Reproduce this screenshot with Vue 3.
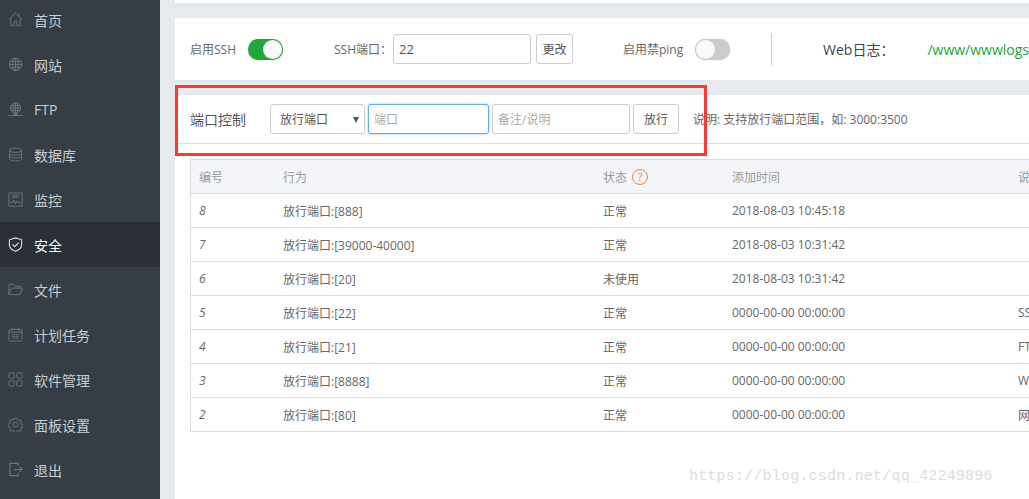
<script setup>
const menu = [
  { label: '首页', icon: 'home' },
  { label: '网站', icon: 'globe' },
  { label: 'FTP', icon: 'ftp' },
  { label: '数据库', icon: 'db' },
  { label: '监控', icon: 'monitor' },
  { label: '安全', icon: 'shield', active: true },
  { label: '文件', icon: 'folder' },
  { label: '计划任务', icon: 'calendar' },
  { label: '软件管理', icon: 'apps' },
  { label: '面板设置', icon: 'gear' },
  { label: '退出', icon: 'exit' },
]
const rows = [
  ['8', '放行端口:[888]', '正常', '2018-08-03 10:45:18', ''],
  ['7', '放行端口:[39000-40000]', '正常', '2018-08-03 10:31:42', ''],
  ['6', '放行端口:[20]', '未使用', '2018-08-03 10:31:42', ''],
  ['5', '放行端口:[22]', '正常', '0000-00-00 00:00:00', 'SSH'],
  ['4', '放行端口:[21]', '正常', '0000-00-00 00:00:00', 'FTP'],
  ['3', '放行端口:[8888]', '正常', '0000-00-00 00:00:00', 'WWW'],
  ['2', '放行端口:[80]', '正常', '0000-00-00 00:00:00', '网站'],
]
</script>

<template>
  <div class="page">
    <aside class="side">
      <div v-for="m in menu" :key="m.label" class="item" :class="{ active: m.active }">
        <svg class="ico" viewBox="0 0 16 16" fill="none" stroke="currentColor" stroke-width="1">
          <template v-if="m.icon === 'home'">
            <path d="M.8 8 8 1.2 15.2 8M3 7v7.5h3.5V10h3v4.5H13V7M11.5 2v2.5" />
          </template>
          <template v-else-if="m.icon === 'globe'">
            <circle cx="8" cy="8" r="6.6" />
            <ellipse cx="8" cy="8" rx="3" ry="6.6" />
            <path d="M1.4 8h13.2M2.2 5h11.6M2.2 11h11.6M8 1.4v13.2" />
          </template>
          <template v-else-if="m.icon === 'ftp'">
            <circle cx="8" cy="6.5" r="5.5" />
            <ellipse cx="8" cy="6.5" rx="2.5" ry="5.5" />
            <path d="M2.5 6.5h11M3 4h10M3 9h10M8 1v11M.3 14.5h15.4" />
            <rect x="6" y="12.5" width="4" height="2.5" fill="currentColor" stroke="none" />
          </template>
          <template v-else-if="m.icon === 'db'">
            <ellipse cx="8" cy="3.5" rx="6.5" ry="2.3" />
            <path d="M1.5 3.5v9c0 1.3 3 2.3 6.5 2.3s6.5-1 6.5-2.3v-9M1.5 6.5c0 1.3 3 2.3 6.5 2.3s6.5-1 6.5-2.3M1.5 9.5c0 1.3 3 2.3 6.5 2.3s6.5-1 6.5-2.3" />
          </template>
          <template v-else-if="m.icon === 'monitor'">
            <rect x="1" y="1" width="14" height="14" />
            <rect x="4" y="2.5" width="8" height="4" fill="currentColor" stroke="none" opacity=".55" />
            <path d="M2 11h3l1.2-2.5 1.6 4 1.4-3 .8 1.5H14" />
          </template>
          <template v-else-if="m.icon === 'shield'">
            <path d="M8 .9 14.5 3v5.5c0 3.2-3 5.4-6.5 6.7-3.500-1.300-6.500-3.500-6.500-6.700V3Z" stroke-width="1.200" />
            <path d="m4.800 7.800 2.400 2.400 4.200-4.200" stroke-width="1.300" />
          </template>
          <template v-else-if="m.icon === 'folder'">
            <path d="M1 13.500V2.500h5l1.500 2H13v2M1 13.500h11.500L15.500 6.500H3.800Z" />
          </template>
          <template v-else-if="m.icon === 'calendar'">
            <rect x="1" y="2.500" width="14" height="12.500" rx="1.500" />
            <path d="M4.500 1v3M11.500 1v3M1 5.500h14" />
            <path d="M4 8h8M4 10h8M4 12h8M6.500 7.500v5M9.500 7.500v5" stroke-dasharray="1.500 .8" />
          </template>
          <template v-else-if="m.icon === 'apps'">
            <rect x="1" y="1" width="5.700" height="5.700" rx="1.200" />
            <rect x="9.300" y="1" width="5.700" height="5.700" rx="1.200" />
            <rect x="1" y="9.300" width="5.700" height="5.700" rx="1.200" />
            <rect x="9.300" y="9.300" width="5.700" height="5.700" rx="1.200" />
          </template>
          <template v-else-if="m.icon === 'gear'">
            <circle cx="8" cy="8" r="2.600" />
            <path d="M6.800 1.200h2.400l.4 1.900 1.500.7 1.700-1 1.600 1.700-1 1.600.7 1.600 1.900.4v2.400l-1.900.4-.7 1.500 1 1.700-1.700 1.300-1.600-1-1.500.6-.4 1.900H6.800l-.4-1.900-1.500-.6-1.700 1-1.500-1.500 1-1.600-.7-1.500-1.900-.4V7.400l1.900-.4.700-1.500-1-1.700 1.500-1.500 1.700 1 1.500-.7Z" />
          </template>
          <template v-else>
            <path d="M11 4V1.500H2v13h9V12M6.500 8H15M12.500 5.500 15 8l-2.500 2.500" stroke-width="1.200" />
          </template>
        </svg>
        <span>{{ m.label }}</span>
      </div>
    </aside>

    <main class="main">
      <div class="strip"></div>

      <section class="top">
        <span class="lbl">启用SSH</span>
        <span class="switch on"><i></i></span>
        <span class="lbl ssh">SSH端口：</span>
        <input class="field portval" value="22" />
        <button class="btn change">更改</button>
        <span class="lbl ping">启用禁ping</span>
        <span class="switch"><i></i></span>
        <span class="divider"></span>
        <span class="weblabel">Web日志：</span>
        <span class="path">/www/wwwlogs</span>
      </section>

      <section class="panel">
        <div class="ctrl">
          <span class="title">端口控制</span>
          <div class="select">放行端口<b></b></div>
          <input class="field port" placeholder="端口" />
          <input class="field note" placeholder="备注/说明" />
          <button class="btn allow">放行</button>
          <span class="hint">说明: 支持放行端口范围，如: 3000:3500</span>
        </div>

        <div class="table">
          <div class="tr head">
            <div class="c1">编号</div>
            <div class="c2">行为</div>
            <div class="c3">状态<em class="help">?</em></div>
            <div class="c4">添加时间</div>
            <div class="c5">说明</div>
          </div>
          <div v-for="r in rows" :key="r[0]" class="tr">
            <div class="c1 num">{{ r[0] }}</div>
            <div class="c2">{{ r[1] }}</div>
            <div class="c3">{{ r[2] }}</div>
            <div class="c4">{{ r[3] }}</div>
            <div class="c5">{{ r[4] }}</div>
          </div>
        </div>
      </section>

      <div class="redbox"></div>
      <div class="mark">https://blog.csdn.net/qq_42249896</div>
    </main>
  </div>
</template>

<style>
html, body { margin: 0; overflow: hidden; }
</style>

<style scoped>
.page {
  display: flex;
  width: 1029px;
  height: 499px;
  overflow: hidden;
  font-family: "Open Sans", "Noto Sans CJK SC", sans-serif;
  color: #555;
  background: #e6e9ed;
}
.side {
  width: 160px;
  flex: none;
  background: #363d44;
  padding-top: 0;
  margin-top: -3px;
  height: 502px;
}
.item {
  height: 45px;
  display: flex;
  align-items: center;
  padding-left: 8px;
  color: #6f757a;
  font-size: 14px;
}
.item span { color: #c8cdd1; margin-left: 11px; }
.item.active { background: #2b2f36; color: #d8dadc; }
.item.active span { color: #fff; }
.ico { width: 15px; height: 15px; flex: none; }
.main {
  position: relative;
  flex: none;
  width: 869px;
  height: 499px;
  padding-left: 15px;
  box-sizing: border-box;
}
.strip { height: 3px; background: #fff; margin-bottom: 15px; }
.top {
  height: 62px;
  background: #fff;
  display: flex;
  align-items: center;
  white-space: nowrap;
  font-size: 12px;
  padding-left: 15px;
}
.lbl { color: #666; }
.switch {
  width: 35px;
  height: 21px;
  border-radius: 11px;
  background: #ccc;
  margin-left: 12px;
  position: relative;
  flex: none;
  box-shadow: 0 0 1px rgba(0,0,0,.3);
}
.switch i {
  position: absolute;
  left: 1px;
  top: 1px;
  width: 19px;
  height: 19px;
  border-radius: 50%;
  background: #fafafa;
}
.switch.on { background: #20a53a; }
.switch.on i { left: 15px; }
.ssh { margin-left: 51px; }
.field {
  box-sizing: border-box;
  height: 30px;
  border: 1px solid #ccc;
  border-radius: 3px;
  background: #fff;
  font: inherit;
  font-size: 12px;
  color: #555;
  padding: 0 5px;
  outline: none;
}
.field::placeholder { color: #aaa; }
.portval { width: 138px; margin-left: 1px; font-size: 13px; }
.btn {
  box-sizing: border-box;
  height: 30px;
  width: 46px;
  padding: 0;
  border: 1px solid #ccc;
  border-radius: 3px;
  background: #fff;
  font: inherit;
  font-size: 12px;
  color: #555;
}
.change { margin-left: 5px; }
.ping { margin-left: 50px; }
.divider { width: 1px; height: 32px; background: #ccc; margin-left: 41px; }
.weblabel { margin-left: 51px; font-size: 14px; color: #444; }
.path { margin-left: 33px; font-size: 14px; color: #20a53a; }
.panel {
  margin-top: 15px;
  height: 404px;
  background: #fff;
}
.ctrl {
  height: 49px;
  box-sizing: border-box;
  border-bottom: 1px solid #ddd;
  display: flex;
  align-items: center;
  padding: 0 0 0 15px;
  white-space: nowrap;
  font-size: 12px;
}
.title { font-size: 14px; color: #555; width: 80px; flex: none; }
.select {
  box-sizing: border-box;
  width: 95px;
  height: 30px;
  border: 1px solid #ccc;
  border-radius: 3px;
  display: flex;
  align-items: center;
  padding-left: 9px;
  color: #555;
  position: relative;
}
.select b {
  position: absolute;
  right: 5px;
  top: 12px;
  border-left: 3px solid transparent;
  border-right: 3px solid transparent;
  border-top: 6px solid #555;
}
.port {
  width: 121px;
  margin-left: 3px;
  border-color: #66afe9;
  box-shadow: 0 0 3px rgba(102,175,233,.7);
}
.note { width: 138px; margin-left: 3px; }
.allow { margin-left: 3px; }
.hint { margin-left: 14px; color: #666; }
.table {
  margin: 15px 0 0 15px;
  width: 860px;
  border: 1px solid #ddd;
  border-bottom: 0;
  font-size: 12px;
}
.tr {
  height: 34px;
  box-sizing: border-box;
  border-bottom: 1px solid #ddd;
  display: flex;
  align-items: center;
  white-space: nowrap;
  color: #666;
}
.head { height: 34px; background: #f4f5f9; color: #999; }
.c1 { width: 92px; padding-left: 8px; box-sizing: border-box; flex: none; }
.c2 { width: 320px; flex: none; }
.c3 { width: 129px; flex: none; display: flex; align-items: center; }
.c4 { width: 286px; flex: none; }
.num { font-style: italic; }
.help {
  margin-left: 5px;
  width: 14px;
  height: 14px;
  border: 1px solid #ef8c2a;
  border-radius: 50%;
  color: #ef8c2a;
  font-style: normal;
  font-size: 11px;
  line-height: 14px;
  text-align: center;
}
.redbox {
  position: absolute;
  left: 15px;
  top: 85px;
  width: 532px;
  height: 71px;
  box-sizing: border-box;
  border: 3px solid #f93a3a;
  pointer-events: none;
}
.mark {
  position: absolute;
  left: 529px;
  top: 468px;
  font-family: "Liberation Mono", monospace;
  font-size: 15px;
  letter-spacing: .2px;
  color: #dcdcd8;
  white-space: nowrap;
}
</style>
